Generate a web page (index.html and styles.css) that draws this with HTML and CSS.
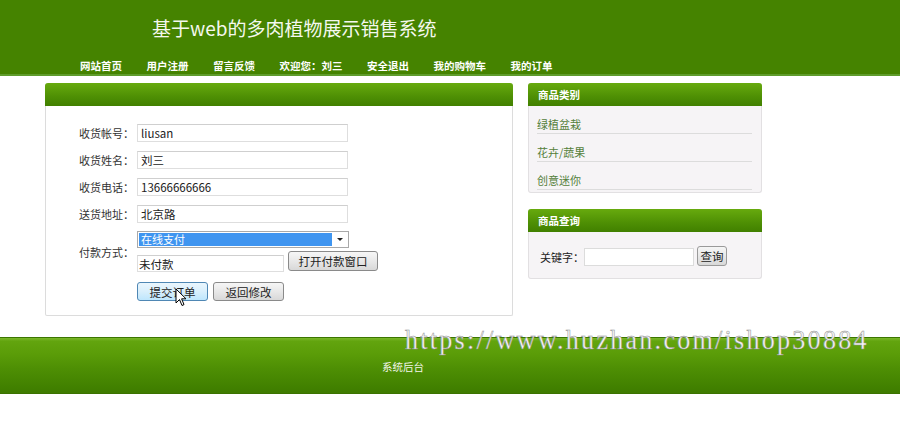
FILE: index.html
```html
<!DOCTYPE html>
<html lang="zh">
<head>
<meta charset="utf-8">
<title>基于web的多肉植物展示销售系统</title>
<link rel="stylesheet" href="styles.css">
</head>
<body>
<header class="top">
  <div class="title">基于web的多肉植物展示销售系统</div>
  <nav class="nav">
    <a>网站首页</a>
    <a>用户注册</a>
    <a>留言反馈</a>
    <a>欢迎您：刘三</a>
    <a>安全退出</a>
    <a>我的购物车</a>
    <a>我的订单</a>
  </nav>
</header>

<main class="wrap">
  <section class="panel">
    <div class="panel-hd"></div>
    <div class="form">
      <div class="row"><span class="lbl">收货帐号：</span><span class="ipt">liusan</span></div>
      <div class="row"><span class="lbl">收货姓名：</span><span class="ipt">刘三</span></div>
      <div class="row"><span class="lbl">收货电话：</span><span class="ipt">13666666666</span></div>
      <div class="row"><span class="lbl">送货地址：</span><span class="ipt">北京路</span></div>
      <div class="row pay">
        <span class="lbl">付款方式：</span>
        <div class="paybox">
          <div class="select"><span class="sel-hl">在线支付</span><span class="arrow"></span></div>
          <div class="payline"><span class="ipt short">未付款</span><span class="btn wide">打开付款窗口</span></div>
        </div>
      </div>
      <div class="row actions">
        <span class="btn hover">提交订单<svg class="cursor" width="12" height="19" viewBox="0 0 12 19"><path d="M1 1 L1 15 L4.5 11.5 L7 17.5 L9 16.6 L6.6 10.8 L11 10.8 Z" fill="#fff" stroke="#000" stroke-width="1" stroke-linejoin="round"/></svg></span>
        <span class="btn">返回修改</span>
      </div>
    </div>
  </section>

  <aside class="side">
    <section class="box">
      <div class="box-hd">商品类别</div>
      <ul class="cats">
        <li>绿植盆栽</li>
        <li>花卉/蔬果</li>
        <li>创意迷你</li>
      </ul>
    </section>
    <section class="box">
      <div class="box-hd">商品查询</div>
      <div class="search">
        <span class="kw">关键字：</span><span class="ipt kw-ipt"></span><span class="btn small">查询</span>
      </div>
    </section>
  </aside>
</main>

<footer class="foot">
  <span class="foot-link">系统后台</span>
</footer>

<div class="watermark">https://www.huzhan.com/ishop30884</div>
</body>
</html>
```

FILE: styles.css
```css
* { box-sizing: border-box; }
html, body { margin: 0; padding: 0; background: #fff; }
body {
  font-family: "Noto Sans CJK SC", "Noto Sans", sans-serif;
  font-size: 11px;
  color: #222;
  position: relative;
  width: 900px;
  height: 442px;
  overflow: hidden;
}

.top {
  height: 76px;
  background: #458300;
  border-bottom: 2px solid #5f9c2c;
}
.title {
  padding: 17px 0 0 152px;
  height: 59px;
  font-size: 19px;
  line-height: 22px;
  color: #f4f8ee;
}
.nav {
  display: flex;
  gap: 24.5px;
  padding-left: 80px;
  line-height: 14px;
  font-size: 10.5px;
  font-weight: 700;
  color: #fff;
  white-space: nowrap;
}

.wrap {
  display: flex;
  align-items: flex-start;
  gap: 15px;
  padding: 7px 0 0 45px;
}

.panel {
  width: 468px;
  height: 233px;
  border: 1px solid #dcdcdc;
  border-top: none;
  border-radius: 3px 3px 2px 2px;
  background: #fff;
}
.panel-hd, .box-hd {
  height: 23px;
  margin: 0 -1px;
  border-radius: 3px 3px 0 0;
  background: linear-gradient(#67aa0e, #4e8f04 60%, #418000);
}
.form {
  padding: 18px 0 0 33px;
  display: flex;
  flex-direction: column;
  gap: 9px;
}
.row {
  display: flex;
  align-items: center;
}
.lbl {
  width: 58px;
  flex: none;
  color: #333;
  white-space: nowrap;
}
.ipt {
  display: block;
  width: 211px;
  height: 18px;
  border: 1px solid #dedede;
  border-top-color: #cfcfcf;
  background: #fff;
  font-size: 11.5px;
  line-height: 16px;
  padding-left: 3px;
  color: #222;
}
.pay { margin-top: -1px; }
.paybox {
  display: flex;
  flex-direction: column;
  gap: 3px;
}
.select {
  width: 212px;
  height: 17px;
  border: 1px solid #a9a9a9;
  background: #fff;
  display: flex;
  align-items: center;
  padding: 1px;
}
.sel-hl {
  flex: 1;
  height: 13px;
  background: #3f95f0;
  color: #fff;
  font-size: 11px;
  line-height: 13px;
  padding-left: 2px;
}
.arrow {
  width: 15px;
  display: flex;
  justify-content: center;
}
.arrow::before {
  content: "";
  border-left: 3px solid transparent;
  border-right: 3px solid transparent;
  border-top: 3px solid #222;
}
.payline {
  display: flex;
  align-items: flex-end;
  gap: 4px;
}
.ipt.short {
  width: 147px;
  height: 17px;
  padding-left: 1px;
}
.btn {
  display: inline-flex;
  align-items: center;
  justify-content: center;
  position: relative;
  height: 20px;
  border: 1px solid #8a8a8a;
  border-radius: 3px;
  background: linear-gradient(#f6f6f6, #e8e8e8 50%, #d8d8d8);
  font-size: 11.5px;
  color: #222;
  white-space: nowrap;
}
.btn.wide { width: 90px; margin-bottom: 1px; }
.actions {
  padding-left: 58px;
  gap: 5px;
  margin-top: 1px;
}
.actions .btn { width: 71px; height: 19px; }
.btn.hover {
  border-color: #4f87b4;
  background: linear-gradient(#eaf6fd, #d9effc 50%, #bee6fd);
}
.cursor {
  position: absolute;
  left: 37px;
  top: 5px;
}

.side {
  width: 234px;
  display: flex;
  flex-direction: column;
  gap: 16px;
}
.box {
  border: 1px solid #e2e0e2;
  border-top: none;
  border-radius: 3px;
  background: #f6f4f6;
}
.box-hd {
  color: #fff;
  font-weight: 700;
  font-size: 10.5px;
  line-height: 23px;
  padding-left: 10px;
}
.cats {
  list-style: none;
  margin: 0;
  padding: 0 9px 2px 8px;
}
.cats li {
  padding-top: 10px;
  line-height: 16px;
  height: 28px;
  border-bottom: 1px solid #dcdcdc;
  color: #54803a;
  font-size: 11px;
}
.search {
  height: 46px;
  display: flex;
  align-items: center;
  padding: 4px 0 0 11px;
}
.kw { width: 44px; flex: none; color: #222; white-space: nowrap; }
.ipt.kw-ipt { width: 110px; flex: none; border-color: #dcdcdc; }
.btn.small {
  width: 30px;
  flex: none;
  margin-left: 3px;
  border-color: #9a9a9a;
  margin-top: -2px;
}

.foot {
  margin-top: 21px;
  height: 57px;
  border-top: 1px solid #3b7600;
  background: linear-gradient(#7ab62a 0, #62a40e 6%, #5a9c08 30%, #4e8f04 55%, #418000 90%, #3f7b00);
  border-bottom: 1px solid #3b7200;
  padding: 20px 0 0 382px;
}
.foot-link {
  color: #f2f6ea;
  font-size: 10.5px;
  line-height: 16px;
}

.watermark {
  position: absolute;
  left: 405px;
  top: 325px;
  font-family: "Liberation Serif", "DejaVu Serif", serif;
  font-size: 27px;
  line-height: 30px;
  letter-spacing: 2.3px;
  color: #f4f4f4;
  -webkit-text-stroke: 0.5px #8f8f8f;
  transform: scaleX(0.968);
  transform-origin: left top;
  white-space: nowrap;
}
```
